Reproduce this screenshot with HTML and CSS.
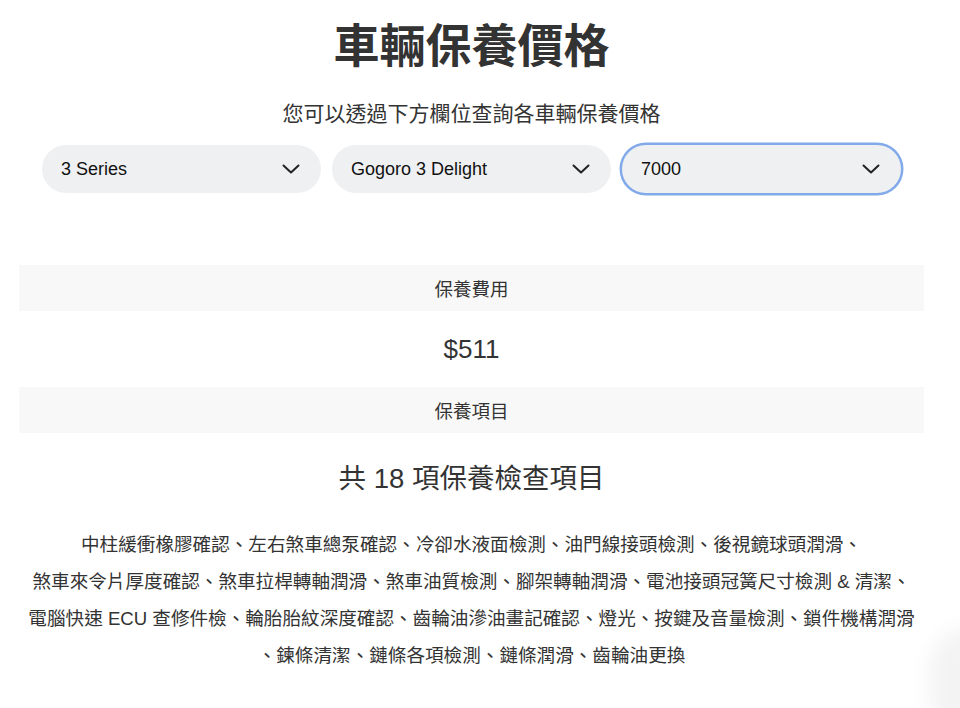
FILE: index.html
```html
<!DOCTYPE html>
<html lang="zh-Hant">
<head>
<meta charset="utf-8">
<title>車輛保養價格</title>
<link rel="stylesheet" href="styles.css">
</head>
<body>
<main class="page">
  <h1 class="title">車輛保養價格</h1>
  <p class="subtitle">您可以透過下方欄位查詢各車輛保養價格</p>

  <div class="filters">
    <div class="select">
      <span class="select-value">3 Series</span>
      <svg class="chevron" viewBox="0 0 18 10" width="18" height="10"><path d="M1.5 1.5 L9 8.5 L16.5 1.5" /></svg>
    </div>
    <div class="select">
      <span class="select-value">Gogoro 3 Delight</span>
      <svg class="chevron" viewBox="0 0 18 10" width="18" height="10"><path d="M1.5 1.5 L9 8.5 L16.5 1.5" /></svg>
    </div>
    <div class="select is-focused">
      <span class="select-value">7000</span>
      <svg class="chevron" viewBox="0 0 18 10" width="18" height="10"><path d="M1.5 1.5 L9 8.5 L16.5 1.5" /></svg>
    </div>
  </div>

  <section class="result">
    <div class="result-label">保養費用</div>
    <div class="result-price">$511</div>
    <div class="result-label">保養項目</div>
    <h2 class="items-heading">共 18 項保養檢查項目</h2>
    <p class="items-list">
      <span class="items-line">中柱緩衝橡膠確認、左右煞車總泵確認、冷卻水液面檢測、油門線接頭檢測、後視鏡球頭潤滑、</span>
      <span class="items-line">煞車來令片厚度確認、煞車拉桿轉軸潤滑、煞車油質檢測、腳架轉軸潤滑、電池接頭冠簧尺寸檢測 &amp; 清潔、</span>
      <span class="items-line">電腦快速 ECU 查修件檢、輪胎胎紋深度確認、齒輪油滲油畫記確認、燈光、按鍵及音量檢測、鎖件機構潤滑</span>
      <span class="items-line">、鍊條清潔、鏈條各項檢測、鏈條潤滑、齒輪油更換</span>
    </p>
  </section>
</main>
<div class="float-btn"></div>
</body>
</html>
```

FILE: styles.css
```css
html, body {
  margin: 0;
  padding: 0;
  background: #ffffff;
}

body {
  font-family: "Liberation Sans", "Noto Sans CJK TC", sans-serif;
  color: #333333;
  overflow: hidden;
}

.page {
  width: 943px;
  padding-top: 15px;
  display: flex;
  flex-direction: column;
  align-items: center;
}

.title {
  margin: 0;
  font-family: "Noto Sans CJK TC", sans-serif;
  font-size: 46px;
  font-weight: 700;
  line-height: 55px;
  color: #333333;
}

.subtitle {
  margin: 27px 0 0;
  font-family: "Noto Sans CJK TC", sans-serif;
  font-size: 21px;
  line-height: 30px;
  color: #333333;
}

.filters {
  margin-top: 18px;
  display: flex;
  gap: 11px;
}

.select {
  width: 279px;
  height: 48px;
  box-sizing: border-box;
  padding: 0 21px 0 19px;
  border-radius: 24px;
  background: #eff0f2;
  display: flex;
  align-items: center;
  justify-content: space-between;
}

.select.is-focused {
  box-shadow: 0 0 0 2.5px #82aaea;
}

.select-value {
  font-size: 18px;
  color: #111111;
}

.chevron path {
  fill: none;
  stroke: #222222;
  stroke-width: 2;
  stroke-linecap: round;
  stroke-linejoin: round;
}

.result {
  margin-top: 72px;
  width: 905px;
  display: flex;
  flex-direction: column;
  align-items: center;
}

.result-label {
  align-self: stretch;
  height: 46px;
  background: #f8f8f8;
  display: flex;
  align-items: center;
  justify-content: center;
  font-family: "Noto Sans CJK TC", sans-serif;
  font-size: 18.5px;
  color: #333333;
}

.result-price {
  height: 76px;
  display: flex;
  align-items: center;
  font-size: 26px;
  color: #333333;
}

.items-heading {
  margin: 28px 0 0;
  font-family: "Liberation Sans", "Noto Sans CJK TC", sans-serif;
  font-size: 27.5px;
  font-weight: 400;
  line-height: 36px;
  color: #333333;
}

.items-list {
  margin: 29px 0 0;
  text-align: center;
  font-size: 18.6px;
  line-height: 37px;
  color: #333333;
}

.items-line {
  display: block;
  white-space: nowrap;
}

/* soft launcher button peeking in from the window edge */
.float-btn {
  position: fixed;
  right: -50px;
  bottom: -30px;
  width: 80px;
  height: 110px;
  border-radius: 40px;
  background: #f3f3f3;
  filter: blur(10px);
}
```
